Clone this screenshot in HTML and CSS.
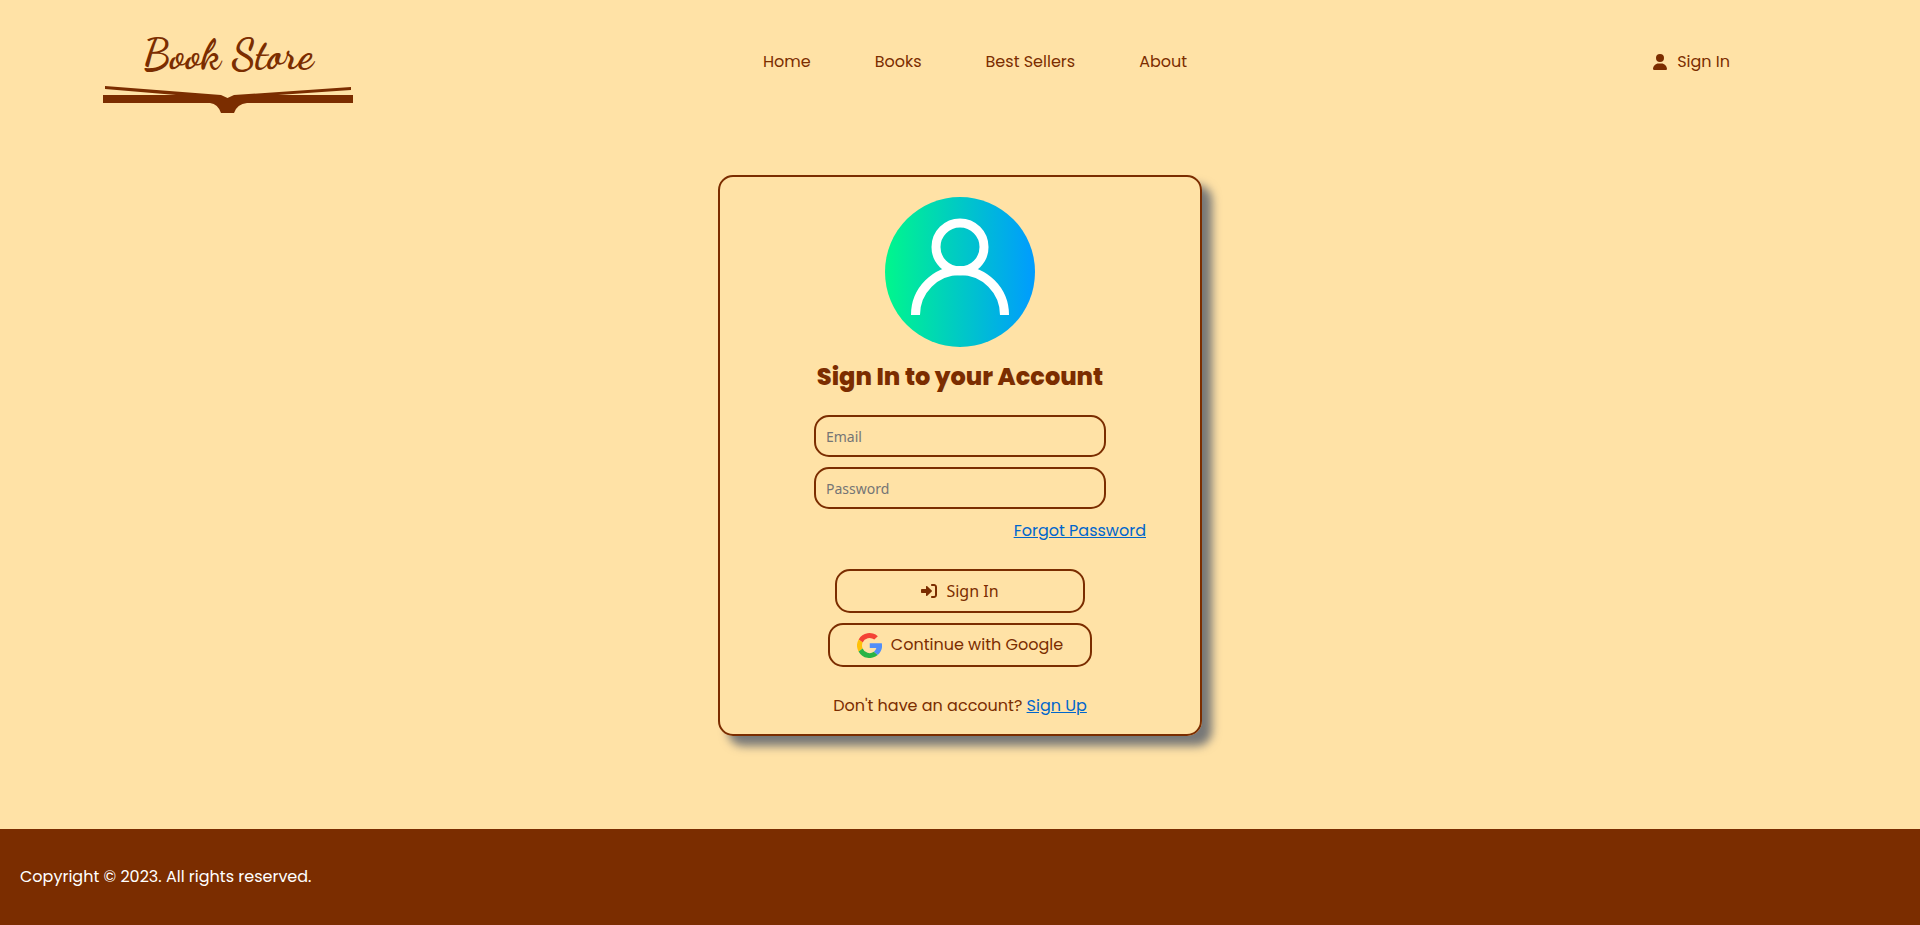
FILE: index.html
```html
<!DOCTYPE html>
<html lang="en">
<head>
<meta charset="utf-8">
<meta name="viewport" content="width=device-width, initial-scale=1">
<title>Book Store</title>
<link rel="stylesheet" href="styles.css">
</head>
<body>
<header class="header">
  <a class="logo" href="#">
    <span class="logo-text">Book Store</span>
    <svg class="logo-book" viewBox="0 0 250 28" aria-hidden="true">
      <path d="M2 0 118 9 124.500 12 131 9 248 1V4L175 9H250V17H144Q134 18 131 27H118Q115 18 107 17H0V9H73L2 3Z"/>
    </svg>
  </a>
  <nav class="nav">
    <a href="#">Home</a>
    <a href="#">Books</a>
    <a href="#">Best Sellers</a>
    <a href="#">About</a>
  </nav>
  <a class="account" href="#">
    <svg class="icon-user" viewBox="0 0 448 512" aria-hidden="true"><path d="M224 256a128 128 0 1 0 0-256 128 128 0 1 0 0 256zm-45.700 48C79.800 304 0 383.800 0 482.300 0 498.700 13.300 512 29.700 512h388.600c16.400 0 29.700-13.300 29.700-29.700C448 383.800 368.200 304 269.700 304z"/></svg>
    Sign In
  </a>
</header>
<main class="main">
  <form class="card">
    <svg class="avatar" viewBox="0 0 150 150" aria-hidden="true">
      <defs><linearGradient id="sky"><stop offset="0" stop-color="#00f78c"/><stop offset="1" stop-color="#009bff"/></linearGradient></defs>
      <circle cx="75" cy="75" r="75" fill="url(#sky)"/>
      <g fill="none" stroke="#fff" stroke-width="9"><circle cx="75" cy="50" r="24"/><path d="M30.500 118A44.500 44.500 0 0 1 119.500 118"/></g>
    </svg>
    <h1 class="title">Sign In to your Account</h1>
    <div class="fields">
      <input class="field" type="email" placeholder="Email" aria-label="Email">
      <input class="field" type="password" placeholder="Password" aria-label="Password">
    </div>
    <a class="link forgot" href="#">Forgot Password</a>
    <div class="actions">
      <button class="button submit" type="submit">
        <svg class="icon-login" viewBox="0 0 512 512" aria-hidden="true"><path d="M352 96h64c17.700 0 32 14.300 32 32v256c0 17.700-14.300 32-32 32h-64c-17.700 0-32 14.300-32 32s14.300 32 32 32h64c53 0 96-43 96-96V128c0-53-43-96-96-96h-64c-17.700 0-32 14.300-32 32s14.300 32 32 32zm-7.500 177.400c4.800-4.500 7.500-10.800 7.500-17.400s-2.700-12.900-7.500-17.400l-144-136c-7-6.600-17.200-8.400-26-4.600S160 110.400 160 120v72H32c-17.700 0-32 14.300-32 32v64c0 17.700 14.300 32 32 32h128v72c0 9.600 5.700 18.200 14.500 22s19 2 26-4.600z"/></svg>
        Sign In
      </button>
      <button class="button google" type="button">
        <svg class="icon-google" viewBox="0 0 48 48" aria-hidden="true">
          <path fill="#f44336" d="M3.200 12.300A24 24 0 0 1 40 6.200L33.200 12.600A14.500 14.500 0 0 0 10.800 18.400Z"/>
          <path fill="#ffc107" d="M3.200 12.300 10.800 18.400A14.500 14.500 0 0 0 10.800 29.600L3 35.500A24 24 0 0 1 3.200 12.300Z"/>
          <path fill="#28b446" d="M3 35.500 10.800 29.600A14.500 14.500 0 0 0 32.500 36L39.800 42.200A24 24 0 0 1 3 35.500Z"/>
          <path fill="#518ef8" d="M24.500 19.500H47.600A24 24 0 0 1 39.800 42.200L32.500 36Q36 33.500 37.200 29H24.500Z"/>
        </svg>
        Continue with Google
      </button>
    </div>
    <p class="signup">Don't have an account? <a class="link" href="#">Sign Up</a></p>
  </form>
</main>
<footer class="footer">Copyright © 2023. All rights reserved.</footer>
</body>
</html>
```
FILE: styles.css
```css
* {
  box-sizing: border-box;
}

body {
  display: flex;
  flex-direction: column;
  min-height: 100vh;
  margin: 0;
  background: #ffe2a6;
  color: #7b2d00;
  font: 16px/24px Poppins, Inter, sans-serif;
}

a {
  color: inherit;
  text-decoration: none;
}

svg {
  fill: currentColor;
}

.header {
  display: grid;
  grid-template-columns: 1fr auto 1fr;
  align-items: center;
  padding: 24px 73px 0 103px;
}

.logo {
  display: flex;
  flex-direction: column;
  align-items: center;
  width: 250px;
}

.logo-text {
  font: bold 42px/62px Satisfy, "Dancing Script", "Liberation Serif", serif;
}

.logo-book {
  width: 250px;
}

.nav {
  display: flex;
  gap: 64px;
  margin-bottom: 14px;
}

.account {
  display: flex;
  align-items: center;
  justify-self: end;
  gap: 10px;
  margin: 0 117px 14px 0;
}

.icon-user {
  width: 14px;
  height: 16px;
}

.main {
  display: flex;
  flex: 1;
  justify-content: center;
  align-items: flex-start;
  padding: 61px 20px 80px;
}

.card {
  display: flex;
  flex-direction: column;
  align-items: center;
  width: 100%;
  max-width: 484px;
  padding: 20px 54px 16px;
  border: 2px solid #7b2d00;
  border-radius: 15px;
  box-shadow: 10px 10px 10px #777;
}

.avatar {
  width: 150px;
}

.title {
  margin: 12px 0 20px;
  font-size: 24px;
  font-weight: 800;
  line-height: 36px;
}

.fields,
.actions {
  display: flex;
  flex-direction: column;
  align-items: center;
  gap: 10px;
}

.field {
  width: 292px;
  max-width: 100%;
  height: 42px;
  padding: 0 10px;
  border: 2px solid #7b2d00;
  border-radius: 15px;
  background: transparent;
  color: inherit;
  font: 14px "Noto Sans", sans-serif;
}

.field::placeholder {
  color: #757575;
}

.link {
  color: #0066cc;
  text-decoration: underline;
}

.forgot {
  align-self: flex-end;
  margin: 10px 0 26px;
}

.button {
  display: flex;
  align-items: center;
  justify-content: center;
  gap: 9px;
  height: 44px;
  border: 2px solid #7b2d00;
  border-radius: 15px;
  background: transparent;
  color: inherit;
  font: inherit;
}

.submit {
  width: 250px;
  font-family: "Noto Sans", sans-serif;
}

.google {
  width: 264px;
}

.icon-login {
  width: 16px;
}

.icon-google {
  width: 25px;
}

.signup {
  margin: 27px 0 0;
}

.footer {
  padding: 36px 20px;
  background: #7b2d00;
  color: #fff;
}
```
